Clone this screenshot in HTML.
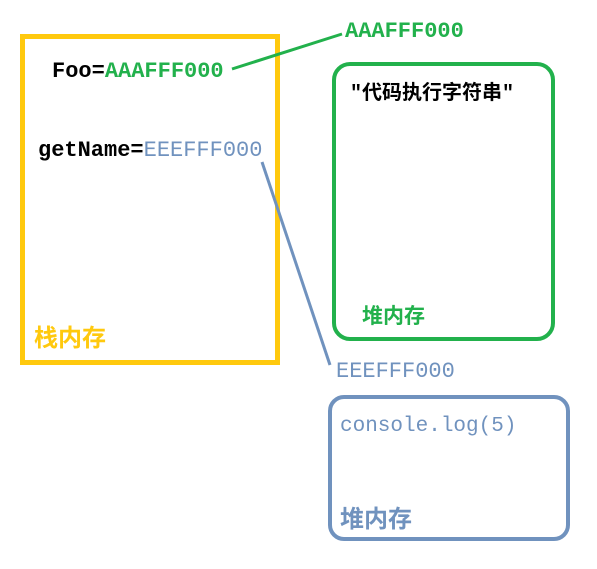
<!DOCTYPE html><html><head><style>
body{margin:0;width:597px;height:569px;background:#fff;position:relative;overflow:hidden;font-family:"Liberation Mono","Noto Sans CJK SC",monospace;font-weight:bold;}
.a{position:absolute;white-space:nowrap;}
.g{color:#22b14c}.b{color:#7092be}.y{color:#ffc90e}
</style></head><body>
<div class="a" style="left:20px;top:34px;width:250px;height:321px;border:5px solid #ffc90e"></div>
<div class="a" style="left:332px;top:62px;width:215px;height:271px;border:4px solid #22b14c;border-radius:18px"></div>
<div class="a" style="left:328px;top:395px;width:234px;height:138px;border:4px solid #7092be;border-radius:16px"></div>
<svg class="a" style="left:0;top:0" width="597" height="569"><line x1="232" y1="69" x2="342" y2="34" stroke="#22b14c" stroke-width="3"/><line x1="262" y1="162" x2="330" y2="365" stroke="#7092be" stroke-width="3"/></svg>
<div class="a" style="left:52px;top:59px;font-size:22px"><span>Foo=</span><span class="g">AAAFFF000</span></div>
<div class="a g" style="left:345px;top:19px;font-size:22px">AAAFFF000</div>
<div class="a" style="left:38px;top:138px;font-size:22px">getName=<span class="b" style="font-weight:normal">EEEFFF000</span></div>
<div class="a" style="left:350px;top:76px;font-size:20px">"代码执行字符串"</div>
<div class="a g" style="left:362px;top:300px;font-size:21px">堆内存</div>
<div class="a y" style="left:34px;top:318px;font-size:24px">栈内存</div>
<div class="a b" style="left:336px;top:359px;font-size:22px;font-weight:normal">EEEFFF000</div>
<div class="a b" style="left:340px;top:415px;font-size:21px;font-weight:normal">console.log(5)</div>
<div class="a b" style="left:340px;top:499px;font-size:24px">堆内存</div>
</body></html>
